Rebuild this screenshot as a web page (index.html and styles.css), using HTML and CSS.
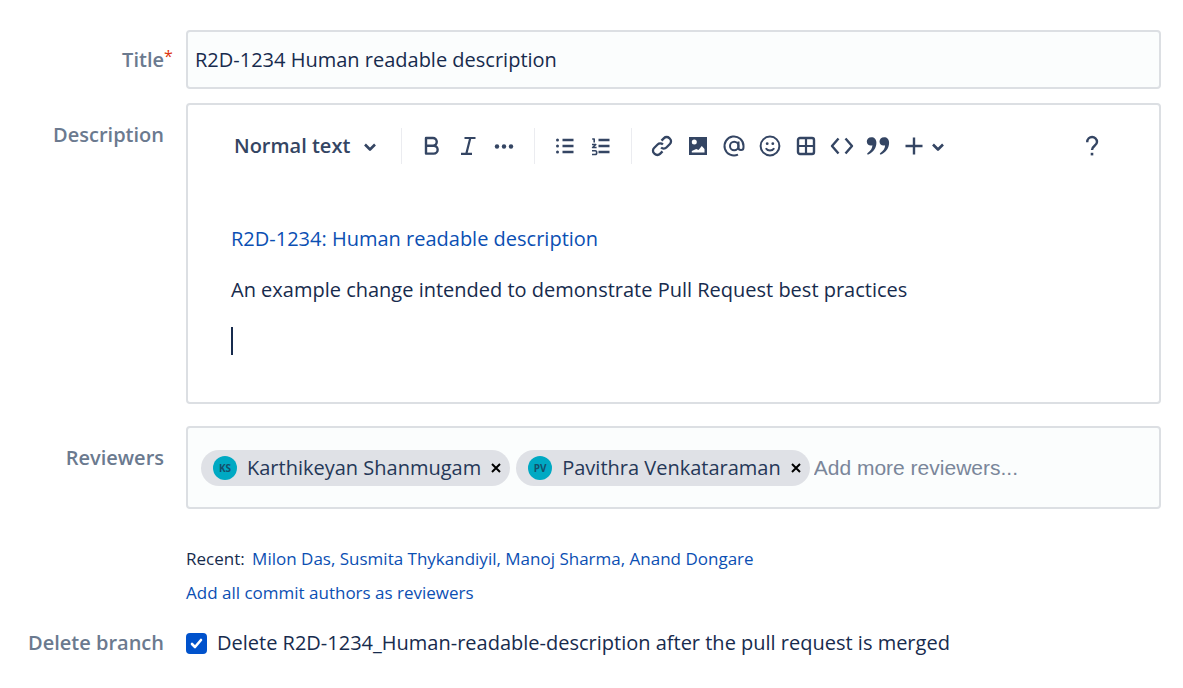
FILE: index.html
```html
<!DOCTYPE html>
<html lang="en">
<head>
<meta charset="utf-8">
<meta name="viewport" content="width=device-width, initial-scale=1">
<title>Create pull request</title>
<link rel="stylesheet" href="styles.css">
</head>
<body>
<form class="form">
  <div class="row row-title">
    <label class="label" for="title">Title<span class="required">*</span></label>
    <input class="field title-input" id="title" type="text" value="R2D-1234 Human readable description">
  </div>

  <div class="row row-description">
    <span class="label" id="description-label">Description</span>
    <div class="field editor">
      <div class="toolbar" role="toolbar" aria-label="Formatting">
        <button class="style-button" type="button">Normal text
          <svg class="chevron" viewBox="0 0 16 24"><path d="m3 10.500 5 5 5-5"/></svg>
        </button>
        <div class="group">
          <button class="tool" type="button" aria-label="Bold"><svg viewBox="0 0 24 24"><path stroke-width="2.400" d="M6 4h6.900a3.700 3.700 0 0 1 0 7.700H6zM6 11.700h7.700a3.900 3.900 0 0 1 0 7.900H6z"/></svg></button>
          <button class="tool" type="button" aria-label="Italic"><svg viewBox="0 0 24 24"><path stroke-width="2.200" d="M8.500 4h11M5 19.800h11M14.300 4l-4 15.800"/></svg></button>
          <button class="tool" type="button" aria-label="More formatting"><svg viewBox="0 0 24 24"><g class="solid"><circle cx="5" cy="12.500" r="2.200"/><circle cx="12" cy="12.500" r="2.200"/><circle cx="19" cy="12.500" r="2.200"/></g></svg></button>
        </div>
        <div class="group group-lists">
          <button class="tool" type="button" aria-label="Bullet list"><svg viewBox="0 0 24 24"><path stroke-width="2.400" d="M9.500 6h11M9.500 12h11M9.500 18h11"/><g class="solid"><circle cx="4.500" cy="6" r="1.500"/><circle cx="4.500" cy="12" r="1.500"/><circle cx="4.500" cy="18" r="1.500"/></g></svg></button>
          <button class="tool" type="button" aria-label="Numbered list"><svg viewBox="0 0 24 24"><path stroke-width="2.400" d="M9.500 6h11M9.500 12h11M9.500 18h11"/><path stroke-width="1.600" d="M3.200 5h2v3.500M3 10.500h3.800l-3.200 3h4M3 16.800h3.200c2 0 2 3.700 0 3.700H3"/></svg></button>
        </div>
        <div class="group">
          <button class="tool" type="button" aria-label="Link"><svg viewBox="0 0 24 24"><path stroke-width="2.300" d="m11.500 6.600 2.500-2.500a3.700 3.700 0 0 1 5.300 0l.6.600a3.700 3.700 0 0 1 0 5.300l-3.500 3.500a3.700 3.700 0 0 1-5.300 0M12.500 17.400 10 19.900a3.700 3.700 0 0 1-5.300 0l-.6-.6a3.700 3.700 0 0 1 0-5.300l3.500-3.500a3.700 3.700 0 0 1 5.300 0"/></svg></button>
          <button class="tool" type="button" aria-label="Image"><svg viewBox="0 0 24 24"><path class="solid" fill-rule="evenodd" d="M3 3h18v18H3zM8.300 5.500a2.500 2.500 0 1 0 0 5 2.500 2.500 0 0 0 0-5M5.800 18.500h12.700v-3.600L15.800 12l-3.300 3.900-2.300-.9-4.400 2z"/></svg></button>
          <button class="tool" type="button" aria-label="Mention"><svg viewBox="0 0 24 24"><path stroke-width="2" d="M16 20.600A9.500 9.500 0 1 1 21.500 12v1.200c0 3.800-5 3.800-5 0V7.500"/><circle cx="12.200" cy="12" r="4.200" stroke-width="2"/></svg></button>
          <button class="tool" type="button" aria-label="Emoji"><svg viewBox="0 0 24 24"><circle cx="12" cy="12" r="9.400" stroke-width="2"/><path stroke-width="2" d="M7.800 14.200c1.800 3 6.600 3 8.400 0"/><g class="solid"><circle cx="9.200" cy="9.700" r="1.400"/><circle cx="14.800" cy="9.700" r="1.400"/></g></svg></button>
          <button class="tool" type="button" aria-label="Table"><svg viewBox="0 0 24 24"><rect x="4" y="4" width="16" height="16" rx="2" stroke-width="2.400"/><path stroke-width="2.200" d="M12 4v16M4 12h16"/></svg></button>
          <button class="tool" type="button" aria-label="Code"><svg viewBox="0 0 24 24"><path stroke-width="2.400" d="M8.500 4.500 2 12l6.500 7.500M15.500 4.500 22 12l-6.500 7.500"/></svg></button>
          <button class="tool" type="button" aria-label="Quote"><svg viewBox="0 0 24 24"><path class="solid" d="M5.500 3.300c-3 0-4.700 2-4.700 4.300 0 2.400 1.800 4 4 4 .8 0 1.300-.1 1.600-.3-.1 3-1.600 5.600-5 7.900-.7.600.2 1.700 1 1.300 5.300-2.400 8-7 8-11.700 0-3.500-2.100-5.500-4.900-5.500M18.200 3.300c-3 0-4.700 2-4.700 4.300 0 2.400 1.800 4 4 4 .8 0 1.300-.1 1.600-.3-.1 3-1.600 5.600-5 7.900-.7.600.2 1.700 1 1.300 5.300-2.400 8-7 8-11.700 0-3.500-2.100-5.500-4.900-5.500"/></svg></button>
          <button class="tool tool-insert" type="button" aria-label="Insert"><svg viewBox="0 0 24 24"><path stroke-width="2.400" d="M12 3.500v17M3.500 12h17"/></svg><svg class="chevron" viewBox="0 0 16 24"><path d="m3 10.500 5 5 5-5"/></svg></button>
        </div>
        <button class="tool help" type="button" aria-label="Help"><svg viewBox="0 0 24 24"><path stroke-width="2.400" d="M7.200 8.300c0-7 9.800-7 9.800-.2 0 3.800-5 3.600-5 7.900"/><path class="solid" d="M10.700 18.800h2.600v2.600h-2.600z"/></svg></button>
      </div>
      <div class="content" role="textbox" aria-multiline="true" aria-labelledby="description-label" contenteditable="true">
        <p><a href="#issue">R2D-1234: Human readable description</a></p>
        <p>An example change intended to demonstrate Pull Request best practices</p>
        <p class="caret-line"><span class="caret"></span></p>
      </div>
    </div>
  </div>

  <div class="row row-reviewers">
    <label class="label" for="reviewers">Reviewers</label>
    <div class="field reviewers">
      <span class="chip"><span class="avatar">KS</span>Karthikeyan Shanmugam<button class="remove" type="button" aria-label="Remove Karthikeyan Shanmugam"><svg viewBox="0 0 10 10"><path d="m1 1 8 8M9 1 1 9"/></svg></button></span>
      <span class="chip"><span class="avatar">PV</span>Pavithra Venkataraman<button class="remove" type="button" aria-label="Remove Pavithra Venkataraman"><svg viewBox="0 0 10 10"><path d="m1 1 8 8M9 1 1 9"/></svg></button></span>
      <input class="reviewer-input" id="reviewers" type="text" placeholder="Add more reviewers...">
    </div>
  </div>

  <div class="hints">
    <p>Recent: <span class="recent"><a href="#milon">Milon Das</a>, <a href="#susmita">Susmita Thykandiyil</a>, <a href="#manoj">Manoj Sharma</a>, <a href="#anand">Anand Dongare</a></span></p>
    <p><a href="#authors">Add all commit authors as reviewers</a></p>
  </div>

  <div class="row row-delete">
    <span class="label">Delete branch</span>
    <div class="check">
      <input class="checkbox" id="delete" type="checkbox" checked>
      <label for="delete">Delete R2D-1234_Human-readable-description after the pull request is merged</label>
    </div>
  </div>
</form>
</body>
</html>
```
FILE: styles.css
```css
* { box-sizing: border-box; }

body {
  margin: 0;
  background: #fff;
  color: #172b4d;
  font: 20px/28px "Open Sans", "Noto Sans", sans-serif;
}

p { margin: 0; }
a { color: #0b4fb3; text-decoration: none; }
button { border: 0; padding: 0; background: none; color: inherit; font: inherit; cursor: pointer; }
svg { display: block; fill: none; stroke: currentColor; stroke-linejoin: round; }
.solid { fill: currentColor; stroke: none; }

.form { padding: 30px 22px 30px 0; }
.row { display: grid; grid-template-columns: 164px minmax(0, 1fr); column-gap: 22px; }
.label {
  position: relative;
  justify-self: end;
  color: #6b7a8f;
  font-weight: 600;
}
.required {
  position: absolute;
  left: 100%;
  top: -4px;
  color: #de350b;
  font-size: 16px;
  font-weight: 400;
}
.field {
  width: 100%;
  border: 2px solid #dcdfe3;
  border-radius: 4px;
  background: #fbfdfd;
}

.row-title { align-items: center; }
.title-input { height: 59px; padding: 0 7px; color: inherit; font: inherit; }

.row-description { margin-top: 14px; }
.row-description .label { padding-top: 18px; }
.editor { background: #fff; padding: 22px 40px 47px 43px; }
.toolbar { display: flex; align-items: center; height: 37px; color: #344563; }
.style-button { display: flex; align-items: center; gap: 12px; padding: 0 23px 0 3px; font-weight: 600; }
.chevron { width: 16px; height: 24px; stroke-width: 2.6; }
.group { display: flex; align-items: center; gap: 12px; height: 36px; padding: 0 18px; border-left: 1px solid #ebecf0; }
.tool svg { width: 24px; height: 24px; }
.tool-insert { display: flex; align-items: center; gap: 4px; }
.tool-insert .chevron { width: 16px; }
.help { margin-left: auto; margin-right: 15px; }

.content { margin-top: 61px; display: grid; gap: 23px; outline: 0; }
.caret { display: block; width: 2px; height: 28px; background: #172b4d; }

.row-reviewers { margin-top: 22px; }
.row-reviewers .label { padding-top: 18px; }
.reviewers { display: flex; align-items: center; gap: 6px; height: 83px; padding: 0 13px; }
.chip {
  display: flex;
  align-items: center;
  flex: none;
  height: 36px;
  padding: 0 9px 0 12px;
  border-radius: 18px;
  background: #dfe1e6;
  color: #253858;
}
.avatar {
  width: 24px;
  height: 24px;
  margin-right: 10px;
  border-radius: 50%;
  background: #00a9c3;
  color: #14506b;
  font-size: 10px;
  font-weight: 700;
  line-height: 24px;
  text-align: center;
}
.remove { margin-left: 10px; color: #000; }
.remove svg { width: 10px; height: 10px; stroke-width: 2; }
.reviewer-input {
  flex: 1;
  min-width: 0;
  margin-left: -2px;
  padding: 0;
  border: 0;
  outline: 0;
  background: none;
  font: 21px/28px "Liberation Sans", Arial, sans-serif;
}
.reviewer-input::placeholder { color: #7a869a; opacity: 1; }

.hints { display: grid; gap: 10px; margin: 38px 0 0 186px; font-size: 17px; line-height: 24px; }
.recent { margin-left: 3px; color: #0b4fb3; }

.row-delete { margin-top: 24px; }
.check { display: flex; align-items: center; gap: 10px; }
.checkbox {
  appearance: none;
  width: 21px;
  height: 21px;
  margin: 0;
  border-radius: 4px;
  background: #0052cc url("data:image/svg+xml,%3Csvg xmlns='http://www.w3.org/2000/svg' viewBox='0 0 21 21'%3E%3Cpath d='m6 11 3 3 6-7' fill='none' stroke='white' stroke-width='2.600' stroke-linecap='round' stroke-linejoin='round'/%3E%3C/svg%3E") center / 21px 21px no-repeat;
}
```
